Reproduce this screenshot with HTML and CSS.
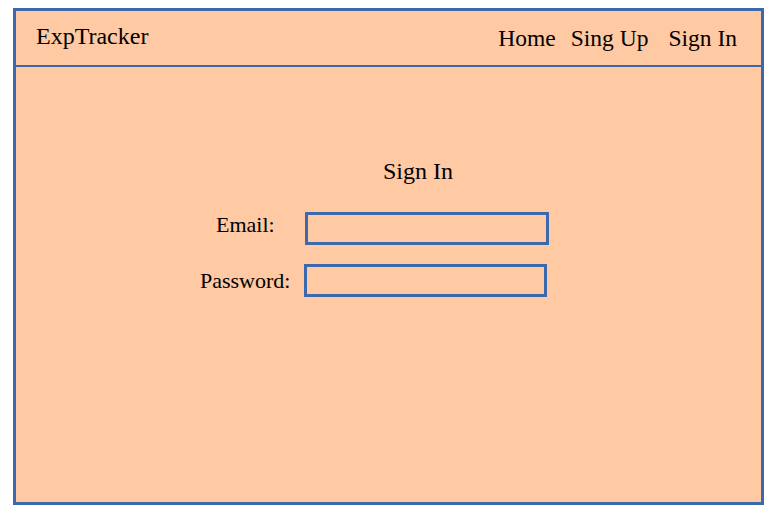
FILE: index.html
```html
<!DOCTYPE html>
<html>
<head>
<meta charset="utf-8">
<link rel="stylesheet" href="styles.css">
</head>
<body>
<div class="frame">
  <header class="header">
    <div class="brand">ExpTracker</div>
    <nav class="nav">
      <span class="nav-home">Home</span>
      <span class="nav-signup">Sing Up</span>
      <span class="nav-signin">Sign In</span>
    </nav>
  </header>
  <main class="main">
    <div class="title">Sign In</div>
    <div class="row row-email">
      <span class="label">Email:</span>
      <div class="input input-email"></div>
    </div>
    <div class="row row-password">
      <span class="label">Password:</span>
      <div class="input input-password"></div>
    </div>
  </main>
</div>
</body>
</html>
```
FILE: styles.css
```css
html, body {
  margin: 0;
  padding: 0;
  background: #ffffff;
}
body {
  font-family: "Liberation Serif", "Times New Roman", serif;
  color: #000;
}
.frame {
  box-sizing: border-box;
  margin: 8px 0 0 13px;
  width: 751px;
  height: 497px;
  border: 3px solid #3c69ab;
  background: #fec9a3;
  display: flex;
  flex-direction: column;
}
.header {
  box-sizing: border-box;
  height: 56px;
  border-bottom: 2px solid #3c69ab;
  display: flex;
  align-items: center;
  justify-content: space-between;
  padding: 0 24px 0 20px;
  font-size: 23.5px;
}
.brand {
  margin-top: -3px;
  font-size: 24px;
}
.nav {
  display: flex;
}
.nav-signup {
  margin-left: 15px;
}
.nav-signin {
  margin-left: 20px;
}
.main {
  flex: 1;
  padding-top: 90px;
  display: flex;
  flex-direction: column;
}
.title {
  font-size: 24px;
  line-height: 28px;
  padding-left: 367px;
}
.row {
  display: flex;
  align-items: center;
  font-size: 22px;
}
.row-email {
  margin-top: 27px;
  padding-left: 200px;
  gap: 30px;
}
.row-password {
  margin-top: 19px;
  padding-left: 184px;
  gap: 14px;
}
.label {
  line-height: 24px;
}
.row-email .label {
  margin-top: -8px;
}
.input {
  box-sizing: border-box;
  height: 33px;
  border: 3px solid #3c69ab;
}
.input-email {
  width: 244px;
}
.input-password {
  width: 243px;
}
```
